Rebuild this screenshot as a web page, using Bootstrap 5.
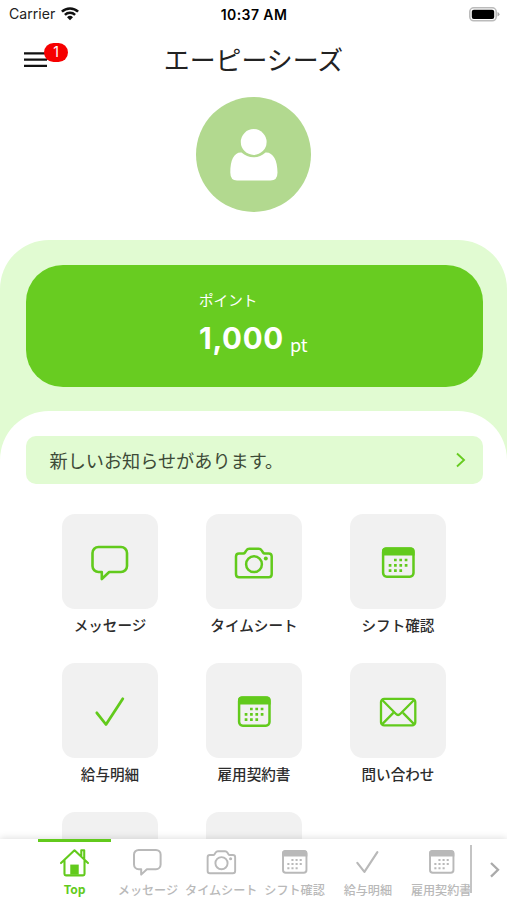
<!DOCTYPE html>
<html lang="ja">
<head>
<meta charset="utf-8">
<meta name="viewport" content="width=device-width, initial-scale=1">
<title>エーピーシーズ</title>
<link href="https://cdn.jsdelivr.net/npm/bootstrap@5.3.0/dist/css/bootstrap.min.css" rel="stylesheet">
<style>
:root { --brand: #68cc21; --pale: #e1fbd2; --tile: #f1f1f1; --muted-icon: #b9b9b9; }
body { font-family: Inter, "Noto Sans CJK JP", sans-serif; color: #222; height: 900px; }
.status-bar { height: 28px; font-size: 14.1px; color: #222; padding: 0 7px 0 9px; }
.status-bar > div { flex: 1 1 0; }
.status-bar .wifi { margin-left: -2px; }
.clock { font-weight: 600; font-size: 14px; letter-spacing: .4px; margin-right: 1px; }
.app-header { height: 69px; }
.app-header h1 { font-size: 25.9px; line-height: 1; color: #222; padding-bottom: 3px; }
.menu-btn { left: 24px; top: 24px; width: 23px; line-height: 0; }
.menu-badge { left: 20px; top: -9px; width: 24px; height: 18.5px; background: #f60000; font-size: 14px; line-height: 18.5px; }
.avatar { width: 115px; height: 115px; background: #b2d98f; }
.point-zone { margin-top: 28px; height: 220px; background: var(--pale); border-radius: 49px 49px 0 0; padding: 25px 24.5px 0 25.5px; }
.point-card { height: 122px; border-radius: 37px; background: var(--brand); padding-top: 26.5px; }
.point-inner { width: 110px; }
.point-label { font-size: 14.6px; line-height: 18px; }
.point-row { padding-top: 10px; }
.point-num { font-size: 29.5px; line-height: 36px; letter-spacing: .7px; }
.point-unit { font-size: 18px; font-family: "Noto Sans CJK JP", sans-serif; line-height: 24px; margin-left: 6px; }
.sheet { margin-top: -49px; border-radius: 49px 49px 0 0; padding: 25px 24px 0 26px; min-height: 0; }
.notice { height: 48px; border-radius: 10px; background: var(--pale); color: #3d4a37; font-size: 18.15px; padding: 0 17px 0 23.5px; }
.notice span { padding-top: 4px; }
.tiles { margin-top: 30px; padding: 0 13px 0 12px; }
.tiles .tile-col { height: 149px; }
.tile { width: 96px; height: 95px; border-radius: 13px; background: var(--tile); color: #62ca1c; }
.tile-label { font-size: 14.6px; font-weight: 500; line-height: 20px; margin-top: 7px; color: #2c2c2c; }
.tab-bar { height: 61.5px; box-shadow: 0 -1px 7px rgba(0,0,0,.13); padding-left: 38px; z-index: 2; color: var(--muted-icon); }
.tabs-strip { width: 433.5px; height: 100%; }
.tab-cell { flex: 0 0 73.3px; border-top: 3px solid transparent; }
.tab-cell svg { width: 37px; height: 37px; margin-top: 1.5px; }
.tab-cell span { font-size: 12.1px; line-height: 14px; margin-top: 4px; white-space: nowrap; font-weight: 500; }
.tab-cell.current { color: #62ca1c; border-top-color: #62ca1c; }
.tab-cell.current span { font-family: "Noto Sans CJK JP", sans-serif; font-weight: 700; margin-top: 2px; }
.strip-end { width: 2px; height: 48px; background: #c4c4c4; margin-top: 6px; margin-left: -2px; z-index: 1; }
.strip-next { padding: 2px 6px 0 0; }
</style>
</head>
<body class="d-flex flex-column overflow-hidden bg-white">

<svg width="0" height="0" class="position-absolute" aria-hidden="true">
  <defs>
    <symbol id="i-message" viewBox="0 0 48 48"><path d="M12.500 9h22.500a6 6 0 0 1 6 6v13a6 6 0 0 1-6 6H23.200L15.800 41v-7h-3.300a6 6 0 0 1-6-6V15a6 6 0 0 1 6-6z" fill="none" stroke="currentColor" stroke-width="2.600" stroke-linejoin="round"/></symbol>
    <symbol id="i-camera" viewBox="0 0 48 48"><g fill="none" stroke="currentColor" stroke-width="2.500" stroke-linejoin="round"><path d="M9 15.500h4.200q1.200 0 1.800-1l1.200-1.900q1.200-1.900 3.200-1.900h9.200q2 0 3.200 1.900l1.200 1.900q.6 1 1.800 1h3.900q3 0 3 3v17.800q0 3-3 3H9q-3 0-3-3V18.500q0-3 3-3z"/><circle cx="24" cy="26.200" r="7.900"/></g><circle cx="35.800" cy="20.400" r="2" fill="currentColor"/></symbol>
    <symbol id="i-calendar" viewBox="0 0 48 48"><rect x="9.100" y="10.400" width="30.400" height="28.300" rx="3.600" fill="none" stroke="currentColor" stroke-width="2.500"/><path d="M8 17.400V13q0-3.500 3.500-3.500h25.600q3.500 0 3.500 3.500v4.400z" fill="currentColor"/><path d="M20 22h13.600M14.700 27.300h18.900M14.700 32.700h13.400" stroke="currentColor" stroke-width="2.700" stroke-dasharray="2.700 2.650"/></symbol>
    <symbol id="i-check" viewBox="0 0 48 48"><path d="M10.800 25.800L20 37.500 36.800 11.800" fill="none" stroke="currentColor" stroke-width="2.800" stroke-linecap="round" stroke-linejoin="round"/></symbol>
    <symbol id="i-mail" viewBox="0 0 48 48"><g fill="none" stroke="currentColor" stroke-width="2.300" stroke-linejoin="round"><rect x="7" y="11.800" width="34.300" height="26.600" rx="3.200"/><path d="M8 12.800L21.800 26.800q2.300 2.300 4.600 0L40.300 12.800M8 37.400l11.300-11.500M40.300 37.400L29 25.900"/></g></symbol>
    <symbol id="i-home" viewBox="0 0 48 48"><g fill="none" stroke="currentColor" stroke-width="2.700" stroke-linejoin="round" stroke-linecap="round"><path d="M6.500 26L24 9.500 41.500 26M11 22.500v17.700q0 1.800 1.800 1.800h22.400q1.800 0 1.800-1.800V22.500M32.800 16.500V9.300h3.800v11"/></g><path d="M18.500 41V28h11v13z" fill="currentColor"/></symbol>
  </defs>
</svg>

<div class="status-bar d-flex align-items-center flex-shrink-0">
  <div class="d-flex align-items-center gap-2"><span>Carrier</span>
    <svg class="wifi" width="18" height="15" viewBox="0 0 18 15"><g fill="none" stroke="#111" stroke-width="2.500"><path d="M.9 5.700a11.600 11.600 0 0 1 16.200 0M3.900 8.900a7.400 7.400 0 0 1 10.200 0"/></g><path d="M9 14.300L6 11.300a4.300 4.300 0 0 1 6 0z" fill="#111"/></svg>
  </div>
  <span class="clock text-black">10:37 AM</span>
  <div class="text-end lh-1">
    <svg width="31" height="15" viewBox="0 0 31 15"><rect x=".8" y=".8" width="26.400" height="13" rx="4" fill="#fff" stroke="#bbb" stroke-width="1.600"/><rect x="2.800" y="2.700" width="22.400" height="9.200" rx="2" fill="#000"/><path d="M28.500 5v4.600q2-.8 2-2.300t-2-2.300z" fill="#aaa"/></svg>
  </div>
</div>

<header class="app-header position-relative d-flex align-items-center justify-content-center flex-shrink-0">
  <div class="menu-btn position-absolute">
    <svg width="23" height="16" viewBox="0 0 23 16"><path d="M0 1.400h23M0 7.700h23M0 13.900h23" stroke="#111" stroke-width="2.300"/></svg>
    <span class="menu-badge position-absolute rounded-pill text-white text-center">1</span>
  </div>
  <h1 class="m-0 fw-normal">エーピーシーズ</h1>
</header>

<div class="avatar rounded-circle mx-auto flex-shrink-0">
  <svg width="115" height="115" viewBox="0 0 115 115"><path d="M45.500 55.500C49 58.500 53 60.300 57.500 60.300S66 58.500 69.500 55.500C77 55 81.500 63 81.500 75.500Q81.500 83.500 74.500 83.500H41Q34.300 83.500 34.300 75.500C34.300 63 38 55 45.500 55.500z" fill="#fff"/><circle cx="57.700" cy="45" r="14.300" fill="#b2d98f"/><circle cx="57.700" cy="45" r="12.900" fill="#fff"/></svg>
</div>

<section class="point-zone flex-shrink-0">
  <div class="point-card text-white">
    <div class="point-inner mx-auto">
      <div class="point-label">ポイント</div>
      <div class="point-row d-flex align-items-end"><span class="point-num fw-bold">1,000</span><span class="point-unit">pt</span></div>
    </div>
  </div>
</section>

<main class="sheet bg-white flex-grow-1 overflow-hidden">
  <div class="notice d-flex align-items-center justify-content-between">
    <span>新しいお知らせがあります。</span>
    <svg width="11" height="16" viewBox="0 0 11 16"><path d="M2 1.500L9 8l-7 6.500" fill="none" stroke="#68cc21" stroke-width="1.900"/></svg>
  </div>
  <div class="tiles">
    <div class="row g-0">
      <div class="col-4 tile-col d-flex flex-column align-items-center"><div class="tile d-flex align-items-center justify-content-center"><svg width="48" height="48"><use href="#i-message"/></svg></div><div class="tile-label">メッセージ</div></div>
      <div class="col-4 tile-col d-flex flex-column align-items-center"><div class="tile d-flex align-items-center justify-content-center"><svg width="48" height="48"><use href="#i-camera"/></svg></div><div class="tile-label">タイムシート</div></div>
      <div class="col-4 tile-col d-flex flex-column align-items-center"><div class="tile d-flex align-items-center justify-content-center"><svg width="48" height="48"><use href="#i-calendar"/></svg></div><div class="tile-label">シフト確認</div></div>
      <div class="col-4 tile-col d-flex flex-column align-items-center"><div class="tile d-flex align-items-center justify-content-center"><svg width="48" height="48"><use href="#i-check"/></svg></div><div class="tile-label">給与明細</div></div>
      <div class="col-4 tile-col d-flex flex-column align-items-center"><div class="tile d-flex align-items-center justify-content-center"><svg width="48" height="48"><use href="#i-calendar"/></svg></div><div class="tile-label">雇用契約書</div></div>
      <div class="col-4 tile-col d-flex flex-column align-items-center"><div class="tile d-flex align-items-center justify-content-center"><svg width="48" height="48"><use href="#i-mail"/></svg></div><div class="tile-label">問い合わせ</div></div>
      <div class="col-4 tile-col d-flex flex-column align-items-center"><div class="tile"></div></div>
      <div class="col-4 tile-col d-flex flex-column align-items-center"><div class="tile"></div></div>
    </div>
  </div>
</main>

<nav class="tab-bar d-flex bg-white position-relative flex-shrink-0">
  <div class="tabs-strip d-flex">
    <div class="tab-cell current d-flex flex-column align-items-center"><svg><use href="#i-home"/></svg><span>Top</span></div>
    <div class="tab-cell d-flex flex-column align-items-center"><svg><use href="#i-message"/></svg><span>メッセージ</span></div>
    <div class="tab-cell d-flex flex-column align-items-center"><svg><use href="#i-camera"/></svg><span>タイムシート</span></div>
    <div class="tab-cell d-flex flex-column align-items-center"><svg><use href="#i-calendar"/></svg><span>シフト確認</span></div>
    <div class="tab-cell d-flex flex-column align-items-center"><svg><use href="#i-check"/></svg><span>給与明細</span></div>
    <div class="tab-cell d-flex flex-column align-items-center"><svg><use href="#i-calendar"/></svg><span>雇用契約書</span></div>
  </div>
  <div class="strip-end"></div>
  <div class="strip-next flex-grow-1 d-flex justify-content-end align-items-center">
    <svg width="12" height="18" viewBox="0 0 12 18"><path d="M2 2l7 6.800-7 6.800" fill="none" stroke="#aaa" stroke-width="2.300"/></svg>
  </div>
</nav>

<script src="https://cdn.jsdelivr.net/npm/bootstrap@5.3.0/dist/js/bootstrap.bundle.min.js"></script>
</body>
</html>
